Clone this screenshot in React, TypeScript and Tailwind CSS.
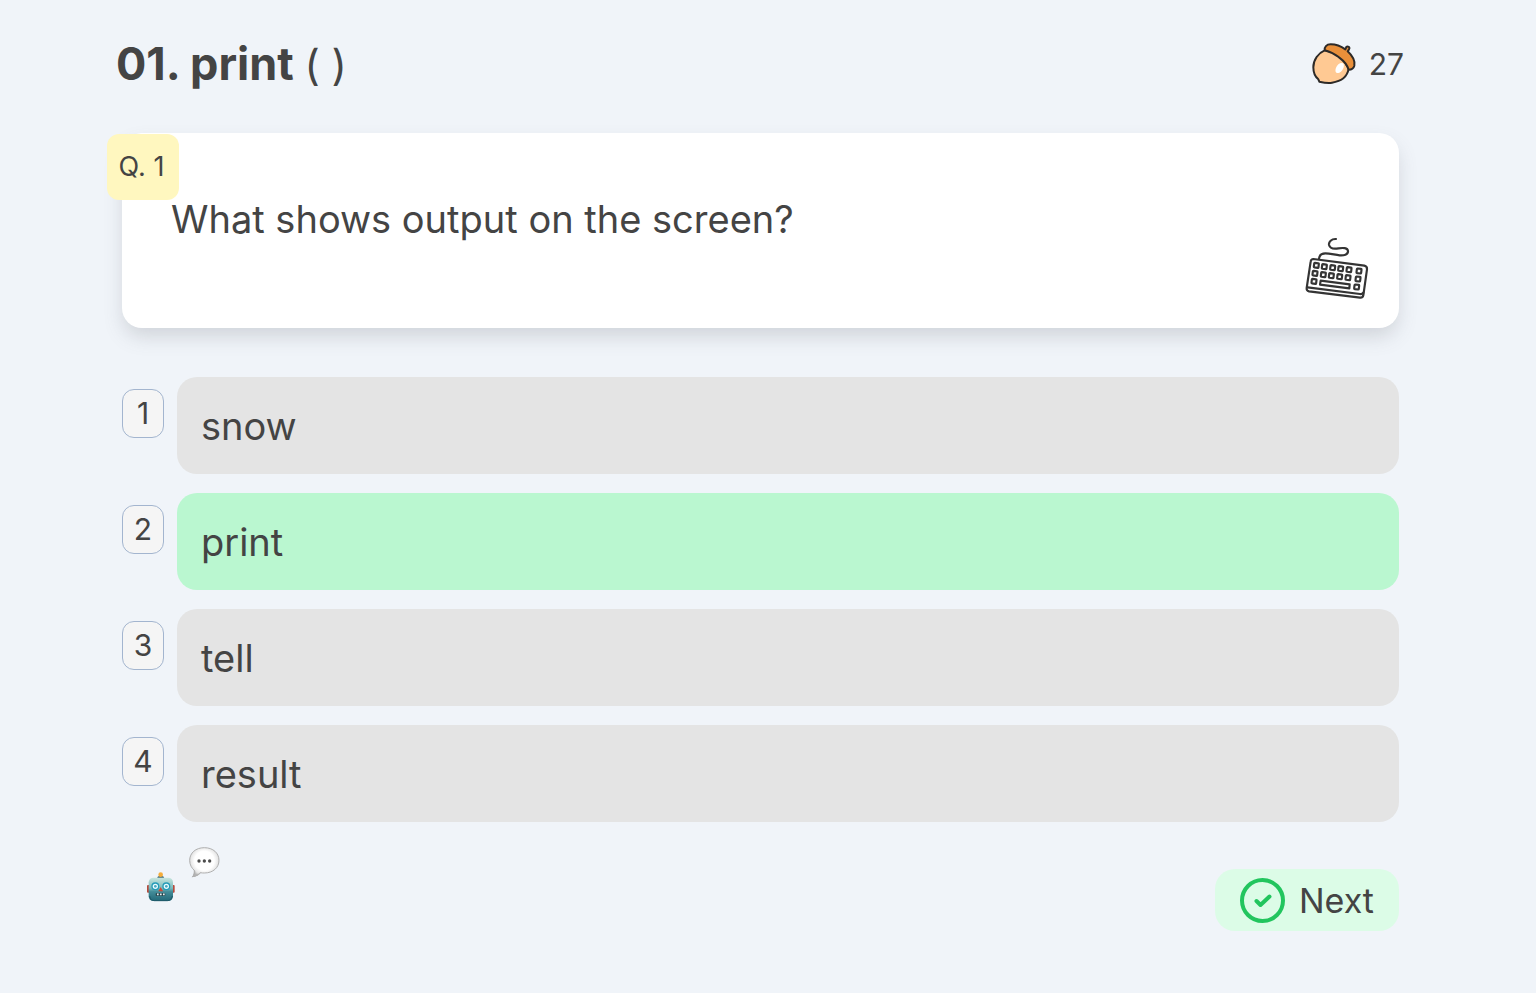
import { useState } from 'react';

const OPTIONS = ['snow', 'print', 'tell', 'result'];

const KEYS = [
  [72, 114], [96, 118], [121, 121], [145, 124], [170, 127], [200, 131],
  [68, 138], [93, 142], [117, 145], [142, 148], [167, 151], [197, 155],
  [65, 162], [193, 179],
];

function AcornIcon() {
  return (
    <svg viewBox="12 12 138 138" className="size-[46px]" aria-hidden="true">
      <g stroke="#2d2a28" strokeWidth="6" strokeLinejoin="round" strokeLinecap="round">
        <path d="M53 40C34 48 19 68 19 91c0 16 5 28 15 36l3 7c14 3 26 5 38 3 28-4 46-18 50-42L100 50z" fill="#ffc993" />
        <path d="M53 40c-1-10 5-18 18-18 16 0 30 5 44 15l3-7q3-3 8 0 3 3 0 7l-4 6c14 13 23 28 20 43-2 7-9 12-17 12-4-14-14-26-29-37-14-11-28-17-43-21z" fill="#e98f3a" />
      </g>
      <ellipse cx="98" cy="93" rx="10" ry="17" fill="#fff" transform="rotate(35 98 93)" />
    </svg>
  );
}

function KeyboardIcon() {
  return (
    <svg viewBox="42 36 195 189" className="w-[65px] h-[63px]" fill="none" stroke="#343434" strokeWidth="6.500" strokeLinecap="round" strokeLinejoin="round" aria-hidden="true">
      <path d="M138 42c-14-1-22 9-21 17 3 12 17 13 28 11 14-2 28-2 29 8 1 11-13 14-25 13-16-2-30-6-43-6-12 0-18 7-19 16" />
      <path d="M70 102l153 20q9 2 8 11l-11 78q-2 8-10 7L57 199q-8-2-7-10l12-79q1-8 8-8z" />
      <path d="M53 187l157 20q7 1 10-4" />
      <path d="M92 167l87 11-1 12-88-11z" />
      {KEYS.map(([x, y]) => (
        <rect key={`${x}-${y}`} x={x} y={y} width="14" height="14" rx="2" transform={`rotate(7 ${x + 7} ${y + 7})`} />
      ))}
    </svg>
  );
}

function RobotIcon() {
  return (
    <svg viewBox="50 110 90 96" className="w-[30px] h-[32px]" aria-hidden="true">
      <defs>
        <linearGradient id="robot-face" x1="0" y1="0" x2="0" y2="1">
          <stop offset="0" stopColor="#c9e6df" />
          <stop offset="0.45" stopColor="#78b9bc" />
          <stop offset="0.6" stopColor="#438c98" />
          <stop offset="1" stopColor="#236878" />
        </linearGradient>
      </defs>
      <rect x="53" y="152" width="9" height="23" rx="3" fill="#b64a3c" />
      <rect x="127" y="152" width="9" height="23" rx="3" fill="#b64a3c" />
      <path d="M83 134q0-10 11-10t11 10z" fill="#46717c" />
      <circle cx="94" cy="121" r="7" fill="#f5ac3a" />
      <rect x="58" y="130" width="73" height="70" rx="14" fill="url(#robot-face)" />
      <path d="M61 185q2 14 14 14h39q12 0 15-14" fill="none" stroke="#1f5969" strokeWidth="3" />
      <circle cx="78" cy="156" r="10" fill="#e9fbff" stroke="#259bb8" strokeWidth="4" />
      <circle cx="111" cy="156" r="10" fill="#e9fbff" stroke="#259bb8" strokeWidth="4" />
      <circle cx="78" cy="156" r="4" fill="#48a9bf" />
      <circle cx="111" cy="156" r="4" fill="#48a9bf" />
      <path d="M94 158l7 13H87z" fill="#cf4937" />
      <rect x="79" y="176" width="29" height="9" rx="3" fill="#294a52" />
      <path d="M83 180h5m4 0h5m4 0h5" stroke="#e4eeee" strokeWidth="5" />
    </svg>
  );
}

function BubbleIcon() {
  return (
    <svg viewBox="170 30 102 102" className="size-[34px]" aria-hidden="true">
      <defs>
        <radialGradient id="bubble" cx="0.5" cy="0.45" r="0.55">
          <stop offset="0.6" stopColor="#fff" />
          <stop offset="0.85" stopColor="#e6e6e6" />
          <stop offset="1" stopColor="#b4b4b4" />
        </radialGradient>
      </defs>
      <path d="M190 102q2 16-6 25 20-2 30-16z" fill="#a9a9a9" />
      <path d="M222 38c26 0 44 16 44 38s-18 38-44 38c-4 0-8 0-12-1-6 6-14 11-23 12 6-6 7-12 6-18-9-7-15-18-15-31 0-22 18-38 44-38z" fill="url(#bubble)" stroke="#b0b0b0" strokeWidth="3" />
      <g fill="#4c4c4c">
        <circle cx="206" cy="78" r="5" />
        <circle cx="222" cy="78" r="5" />
        <circle cx="238" cy="78" r="5" />
      </g>
    </svg>
  );
}

export default function App() {
  const [selected, setSelected] = useState(1);

  return (
    <div className="min-h-screen bg-[#f0f4f9] text-[#444444] font-['Inter','Liberation_Sans',sans-serif]">
      {/* Title bar */}
      <header className="h-[133px] pl-[116px] pr-[132px] pb-1 flex items-center justify-between">
        <h1 className="text-[45px] leading-[56px] font-bold">
          01. print <span className="text-[42px] font-normal">( )</span>
        </h1>
        <div className="flex items-center gap-3 text-[30px] leading-10 pb-[2px]">
          <AcornIcon />
          <span>27</span>
        </div>
      </header>

      <main className="pl-[122px] pr-[137px] pb-8">
        {/* Question */}
        <section className="relative min-h-[195px] bg-white rounded-[20px] shadow-[0_10px_20px_-2px_rgba(90,95,105,0.22)] pl-[49px] pr-8 pt-[62px] pb-7">
          <span className="absolute -left-[15px] top-px w-[72px] h-[66px] rounded-xl bg-[#fff7bf] pr-[3px] flex items-center justify-center text-[27px]">
            Q. 1
          </span>
          <h2 className="text-[38px] leading-[48px]">What shows output on the screen?</h2>
          <div className="absolute right-[30px] bottom-7">
            <KeyboardIcon />
          </div>
        </section>

        {/* Answers */}
        <div className="mt-[49px] space-y-[19px]">
          {OPTIONS.map((option, i) => (
            <button
              key={option}
              type="button"
              aria-pressed={selected === i}
              onClick={() => setSelected(i)}
              className="w-full flex items-start gap-[13px] text-left cursor-pointer"
            >
              <span className="mt-3 w-[42px] h-[49px] shrink-0 rounded-xl border border-[#a3b5cf] bg-[#f5f5f5] flex items-center justify-center text-[30px]">
                {i + 1}
              </span>
              <span
                className={`flex-1 h-[97px] rounded-[20px] px-6 pt-[2px] flex items-center text-[38px] ${
                  selected === i ? 'bg-[#baf7d0]' : 'bg-[#e4e4e4]'
                }`}
              >
                {option}
              </span>
            </button>
          ))}
        </div>

        {/* Footer */}
        <footer className="mt-[23px] pl-6 flex items-start justify-between">
          <div className="flex items-start gap-[11px]">
            <div className="pt-[26px]">
              <RobotIcon />
            </div>
            <BubbleIcon />
          </div>
          <button
            type="button"
            className="mt-6 h-[62px] px-[25px] rounded-[20px] bg-[#dcfce7] flex items-center gap-[14px] text-[34px] cursor-pointer"
          >
            <svg viewBox="0 0 45 45" className="size-[45px]" fill="none" stroke="#22c55e" strokeWidth="4" strokeLinecap="round" strokeLinejoin="round" aria-hidden="true">
              <circle cx="22.500" cy="22.500" r="20.500" />
              <path d="M16.500 23l4 4 9-8.500" />
            </svg>
            Next
          </button>
        </footer>
      </main>
    </div>
  );
}
